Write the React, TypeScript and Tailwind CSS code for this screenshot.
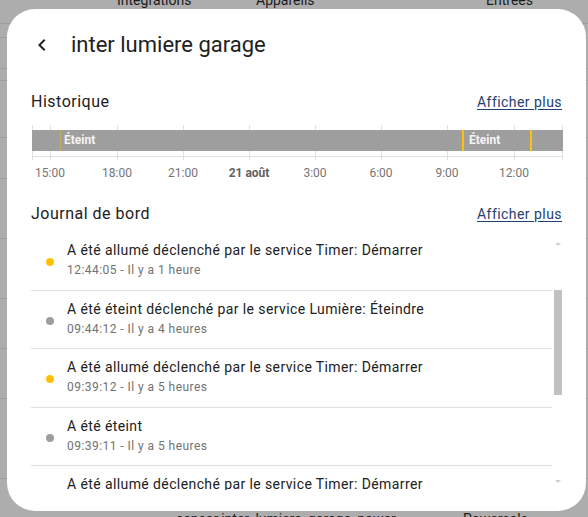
import React from 'react';

type Entry = { on: boolean; text: string; when: string };

const entries: Entry[] = [
  { on: true, text: 'A été allumé déclenché par le service Timer: Démarrer', when: '12:44:05 - Il y a 1 heure' },
  { on: false, text: 'A été éteint déclenché par le service Lumière: Éteindre', when: '09:44:12 - Il y a 4 heures' },
  { on: true, text: 'A été allumé déclenché par le service Timer: Démarrer', when: '09:39:12 - Il y a 5 heures' },
  { on: false, text: 'A été éteint', when: '09:39:11 - Il y a 5 heures' },
  { on: true, text: 'A été allumé déclenché par le service Timer: Démarrer', when: '09:34:10 - Il y a 5 heures' },
];

// x des graduations dans le graphe (0 = bord gauche de la barre)
const ticks = [
  { x: 'left-[18px]', label: '15:00' },
  { x: 'left-[85px]', label: '18:00' },
  { x: 'left-[151px]', label: '21:00' },
  { x: 'left-[217px]', label: '21 août', bold: true },
  { x: 'left-[283px]', label: '3:00' },
  { x: 'left-[349px]', label: '6:00' },
  { x: 'left-[415px]', label: '9:00' },
  { x: 'left-[482px]', label: '12:00' },
];

function Backdrop() {
  return (
    <div className="flex flex-col text-[14px] leading-[20px] text-[#1c1c1c]">
      <div className="flex -mt-[10px] h-[20px]">
        <span className="w-[117px]" />
        <span className="w-[139px]">Intégrations</span>
        <span className="w-[230px]">Appareils</span>
        <span>Entrées</span>
      </div>
      <div className="h-[14px] border-b border-[#9e9e9e]" />
      <div className="h-[14px] border-b border-[#9e9e9e]" />
      <div className="h-[31px] border-b border-[#9e9e9e]" />
      <div className="h-[12px] border-b border-[#9e9e9e]" />
      <div className="h-[57px] border-b border-[#9e9e9e]" />
      <div className="h-[41px] border-b border-[#9e9e9e]" />
      <div className="h-[60px] border-b border-[#9e9e9e]" />
      <div className="h-[60px] border-b border-[#9e9e9e]" />
      <div className="h-[50px] border-b border-[#9e9e9e]" />
      <div className="h-[50px] border-b border-[#9e9e9e]" />
      <div className="h-[80px] border-b border-[#9e9e9e]" />
      <div className="flex pt-[30px]">
        <span className="w-[176px]" />
        <span className="w-[287px]">sensor.inter_lumiere_garage_power</span>
        <span>Powercalc</span>
      </div>
    </div>
  );
}

function Timeline() {
  return (
    <div className="ml-px w-[531px]">
      <div className="relative h-[35px]">
        <div className="absolute left-0 top-0 bottom-0 w-px bg-[#e0e0e0]" />
        <div className="absolute right-0 top-0 bottom-0 w-px bg-[#e0e0e0]" />
        {ticks.map((t) => (
          <div key={t.label} className={'absolute top-0 bottom-0 w-px bg-[#e0e0e0] ' + t.x} />
        ))}
        <div className="absolute left-0 right-0 top-[31px] h-px bg-[#e0e0e0]" />
        <div className="absolute left-0 right-0 top-[5px] h-[21px] flex bg-[#9e9e9e] text-[12px] font-bold leading-[21px] text-[#f5f5f5]">
          <div className="w-[28px]" />
          <div className="w-px bg-[#ffc107]/40" />
          <div className="w-[401px] pl-[3px]">Éteint</div>
          <div className="w-[2px] bg-[#ffc107]" />
          <div className="w-[66px] pl-[5px]">Éteint</div>
          <div className="w-[2px] bg-[#ffc107]" />
        </div>
      </div>
      <div className="relative mt-[5px] h-[16px] text-[12px] leading-[16px] text-[#757575]">
        {ticks.map((t) => (
          <span
            key={t.label}
            className={'absolute top-0 -translate-x-1/2 whitespace-nowrap ' + t.x + (t.bold ? ' font-bold text-[#616161]' : '')}
          >
            {t.label}
          </span>
        ))}
      </div>
    </div>
  );
}

function SectionHead({ title }: { title: string }) {
  return (
    <div className="flex h-[24px] items-center justify-between">
      <span className="text-[16px] leading-[24px] tracking-[0.5px] text-[#212121]">{title}</span>
      <a className="text-[14px] leading-[20px] tracking-[0.45px] text-[#24406f] underline underline-offset-2">Afficher plus</a>
    </div>
  );
}

function Logbook() {
  return (
    <div className="flex h-[258px] overflow-hidden">
      <div className="flex-1">
        {entries.map((e, i) => (
          <div key={i} className="flex h-[58.5px] border-b border-[#e0e0e0] pl-[15px] pt-2">
            <span className={'mt-[18px] h-2 w-2 shrink-0 rounded-full ' + (e.on ? 'bg-[#ffc107]' : 'bg-[#9e9e9e]')} />
            <div className="ml-[13px] flex flex-col whitespace-nowrap">
              <span className="text-[14px] leading-[20px] tracking-[0.4px] text-[#212121]">{e.text}</span>
              <span className="text-[12px] leading-[20px] tracking-[0.45px] text-[#727272]">{e.when}</span>
            </div>
          </div>
        ))}
      </div>
      <div className="ml-px flex w-[9px] flex-col items-center">
        <span className="mt-[10px] h-0 w-0 border-x-[3px] border-b-[3px] border-x-transparent border-b-[#cfcfcf]" />
        <div className="mt-[45px] h-[105px] w-[8px] bg-[#c1c1c1]" />
        <span className="mt-[85px] h-0 w-0 border-x-[3px] border-t-[3px] border-x-transparent border-t-[#cfcfcf]" />
      </div>
    </div>
  );
}

export default function App() {
  return (
    <div className="relative h-[517px] w-[588px] overflow-hidden bg-[#adadad] font-['Roboto',sans-serif]">
      <Backdrop />
      <div className="absolute left-[7px] top-[9px] flex h-[502px] w-[579px] flex-col overflow-hidden rounded-[28px] bg-white">
        <div className="flex h-[72px] items-center pl-[23px]">
          <svg viewBox="0 0 24 24" className="h-6 w-6 fill-[#212121]">
            <path d="M15.41 16.58 10.83 12l4.58-4.59L14 6l-6 6 6 6 1.41-1.42z" />
          </svg>
          <span className="ml-[17px] text-[22px] leading-[28px] text-[#212121]">inter lumiere garage</span>
        </div>
        <div className="flex flex-col px-6 pt-[9px]">
          <SectionHead title="Historique" />
          <div className="mt-[11px]">
            <Timeline />
          </div>
          <div className="mt-[21px]">
            <SectionHead title="Journal de bord" />
          </div>
          <div className="mt-[6px]">
            <Logbook />
          </div>
        </div>
      </div>
    </div>
  );
}
